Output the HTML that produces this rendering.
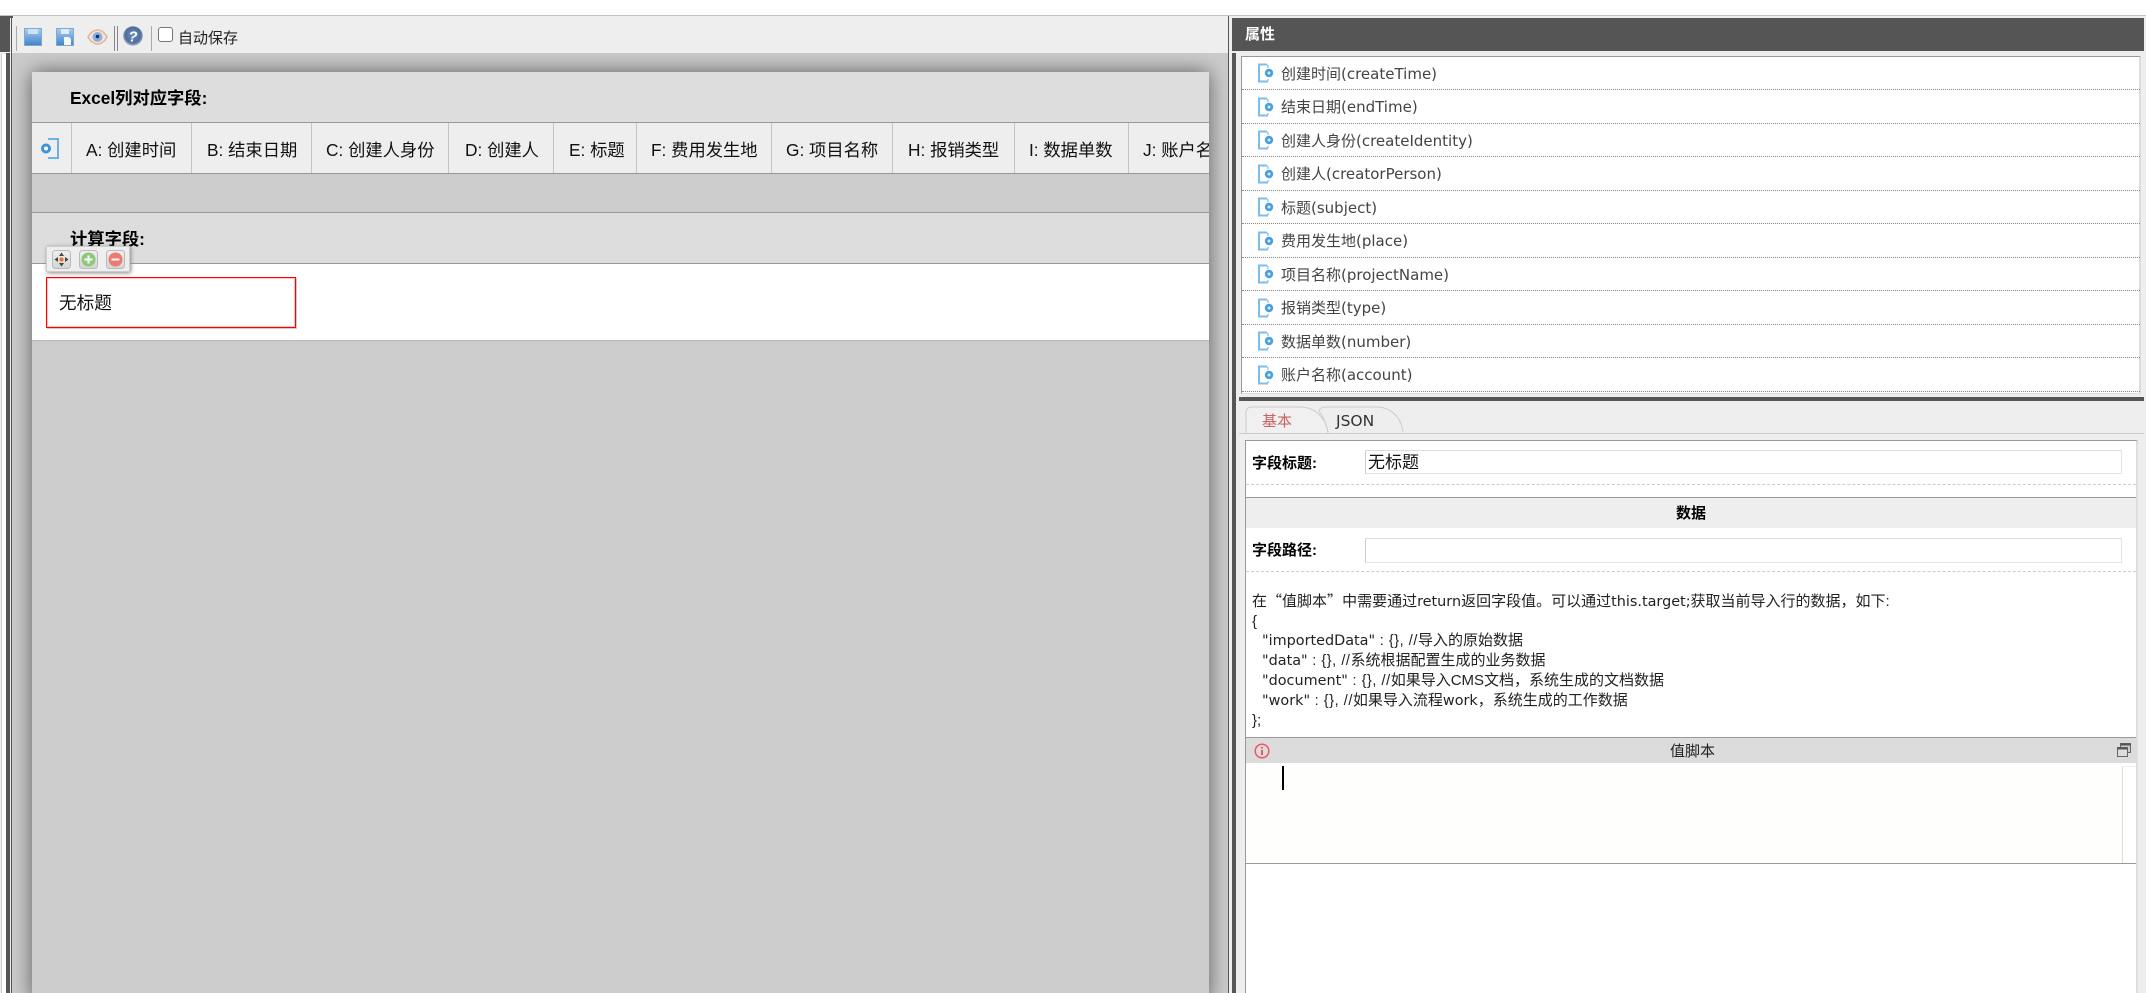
<!DOCTYPE html>
<html lang="zh"><head><meta charset="utf-8"><title>Excel</title>
<style>
html,body{margin:0;padding:0;width:2146px;height:993px;overflow:hidden;background:#fff}
body{position:relative;font-family:"Liberation Sans","Noto Sans CJK SC",sans-serif;color:#111}
.a{position:absolute;box-sizing:border-box}
.t{position:absolute;white-space:nowrap;line-height:20px;height:20px}
.d{font-family:"DejaVu Sans","Noto Sans CJK SC",sans-serif}
.b{font-weight:700}
.cell{position:absolute;top:140px;font-size:17.3px;line-height:20px;white-space:nowrap;color:#111}
.v{position:absolute;top:123px;width:1px;height:50px;background:#c4c4c4}
.li{position:absolute;left:1281px;font-size:15px;color:#444;font-family:"DejaVu Sans","Noto Sans CJK SC",sans-serif;line-height:20px;white-space:nowrap}
.ln{position:absolute;left:1242px;width:898px;height:0;border-top:1px dotted #888}
.ic{position:absolute;left:1257px;width:17px;height:20px}
.ds{position:absolute;font-size:14.4px;line-height:20px;white-space:nowrap;color:#222;font-family:"DejaVu Sans","Noto Sans CJK SC",sans-serif}
.c{font-size:15px;font-family:"Liberation Sans","Noto Sans CJK SC",sans-serif}
.q{font-size:15px;font-family:"Noto Sans CJK SC",sans-serif}
.p{font-size:14.5px;letter-spacing:.55px;font-family:"Liberation Sans","Noto Sans CJK SC",sans-serif}
</style></head><body>

<!-- top line and toolbar -->
<div class="a" style="left:0;top:15px;width:2146px;height:1px;background:#c4c4c4"></div>
<div class="a" style="left:0;top:16px;width:1229px;height:37px;background:#eee"></div>
<div class="a" style="left:0;top:16px;width:13px;height:2px;background:#555"></div>
<div class="a" style="left:0;top:18px;width:10px;height:34px;background:#555"></div>
<div class="a" style="left:0;top:53px;width:11px;height:940px;background:#eee"></div>
<div class="a" style="left:1px;top:54px;width:5px;height:939px;background:#fff;border-left:1px solid #ccc"></div>
<div class="a" style="left:6px;top:53px;width:4px;height:940px;background:#555"></div>
<div class="a" style="left:11px;top:16px;width:1px;height:977px;background:#555"></div>

<!-- toolbar items -->
<div class="a" style="left:16px;top:26px;width:1px;height:25px;background:#aaa"></div>
<svg class="a" style="left:24px;top:28px" width="18" height="18" viewBox="0 0 18 18"><defs><linearGradient id="g1" x1="0" y1="0" x2="0" y2="1"><stop offset="0" stop-color="#a9cdee"/><stop offset="1" stop-color="#3f84c9"/></linearGradient></defs><rect x=".5" y=".5" width="17" height="17" fill="url(#g1)" stroke="#7da8d0"/><rect x="4" y="1" width="10" height="5" fill="#cfe2f4"/></svg>
<svg class="a" style="left:56px;top:28px" width="18" height="18" viewBox="0 0 18 18"><rect x=".5" y=".5" width="17" height="17" fill="url(#g1)" stroke="#7da8d0"/><rect x="5" y="1" width="8" height="5" fill="#e0ecf7"/><path d="M8 9h5l2 2v6H8z" fill="#f4f7fa"/></svg>
<svg class="a" style="left:87px;top:29px" width="21" height="16" viewBox="0 0 21 16"><path d="M1 8C4 2.500 8 1 10.500 1S17 2.500 20 8c-3 5.500-7 7-9.500 7S4 13.500 1 8z" fill="#f2e6da" stroke="#e0b795" stroke-width="1.500"/><circle cx="10.500" cy="8" r="5" fill="#8aaee2"/><circle cx="10.500" cy="7.500" r="1.800" fill="#1d2b50"/></svg>
<div class="a" style="left:114px;top:26px;width:1px;height:25px;background:#888"></div>
<div class="a" style="left:117px;top:26px;width:1px;height:25px;background:#888"></div>
<svg class="a" style="left:123px;top:26px" width="20" height="20" viewBox="0 0 20 20"><defs><radialGradient id="g2" cx=".5" cy=".45" r=".55"><stop offset="0" stop-color="#6f8cbc"/><stop offset=".72" stop-color="#4f6c9e"/><stop offset="1" stop-color="#b4bcc8"/></radialGradient></defs><circle cx="10" cy="10" r="9.800" fill="url(#g2)"/><text x="10" y="15.500" font-family="Liberation Sans" font-weight="700" font-size="15" fill="#fff" text-anchor="middle" font-style="italic">?</text></svg>
<div class="a" style="left:151px;top:26px;width:1px;height:25px;background:#aaa"></div>
<div class="a" style="left:158px;top:27px;width:15px;height:15px;background:#fff;border:1px solid #767676;border-radius:3px"></div>
<div class="t" style="left:178px;top:29px;font-size:15px;color:#222">自动保存</div>

<!-- canvas -->
<div class="a" style="left:12px;top:53px;width:1216px;height:940px;background:#ccc;overflow:hidden">
  <div class="a" style="left:20px;top:19px;width:1177px;height:930px;background:#ccc;box-shadow:0 0 20px rgba(0,0,0,.55)"></div>
</div>
<div class="a" style="left:1228px;top:16px;width:1px;height:977px;background:#555"></div>
<div class="a" style="left:1229px;top:16px;width:917px;height:977px;background:#eee"></div>

<!-- panel contents -->
<div class="a" style="left:32px;top:72px;width:1177px;height:50px;background:#ddd"></div>
<div class="a" style="left:32px;top:122px;width:1177px;height:1px;background:#999"></div>
<div class="a" style="left:32px;top:123px;width:1177px;height:50px;background:#eee"></div>
<div class="a" style="left:32px;top:173px;width:1177px;height:1px;background:#999"></div>
<div class="a" style="left:32px;top:212px;width:1177px;height:1px;background:#999"></div>
<div class="a" style="left:32px;top:213px;width:1177px;height:50px;background:#ddd"></div>
<div class="a" style="left:32px;top:263px;width:1177px;height:1px;background:#999"></div>
<div class="a" style="left:32px;top:264px;width:1177px;height:76px;background:#fff"></div>
<div class="a" style="left:32px;top:340px;width:1177px;height:1px;background:#bbb"></div>

<div class="t b" style="left:70px;top:88px;font-size:17.3px;color:#000">Excel列对应字段:</div>
<div class="t b" style="left:70px;top:229px;font-size:17.3px;color:#000">计算字段:</div>

<svg class="a" style="left:40px;top:138px" width="19" height="21" viewBox="0 0 19 21" fill="none"><path d="M8 1h10v19H8" stroke="#6bb3e6" stroke-width="2"/><circle cx="6" cy="10.500" r="5" fill="#3d93d6"/><circle cx="6" cy="10.500" r="2" fill="#fff"/></svg>
<div class="v" style="left:71px"></div><div class="v" style="left:191px"></div><div class="v" style="left:311px"></div><div class="v" style="left:448px"></div><div class="v" style="left:553px"></div><div class="v" style="left:636px"></div><div class="v" style="left:771px"></div><div class="v" style="left:892px"></div><div class="v" style="left:1014px"></div><div class="v" style="left:1128px"></div>
<div class="cell" style="left:86px">A: 创建时间</div>
<div class="cell" style="left:207px">B: 结束日期</div>
<div class="cell" style="left:326px">C: 创建人身份</div>
<div class="cell" style="left:465px">D: 创建人</div>
<div class="cell" style="left:569px">E: 标题</div>
<div class="cell" style="left:651px">F: 费用发生地</div>
<div class="cell" style="left:786px">G: 项目名称</div>
<div class="cell" style="left:908px">H: 报销类型</div>
<div class="cell" style="left:1029px">I: 数据单数</div>
<div class="a" style="left:1143px;top:123px;width:66px;height:50px;overflow:hidden"><div class="cell" style="left:0;top:17px">J: 账户名称</div></div>

<!-- selected field -->
<div class="a" style="left:46px;top:277px;width:250px;height:51px;border:1px solid #f00;background:#fff;box-shadow:inset 0 0 0 1px rgba(255,0,0,.22),1px 1px 0 #ccc"></div>
<div class="t" style="left:59px;top:292px;font-size:17.6px;color:#111;margin-top:1px">无标题</div>
<div class="a" style="left:46px;top:246px;width:84px;height:26px;background:#eee;border:1px solid #ccc;box-shadow:1px 1px 4px #888"></div>
<svg class="a" style="left:52px;top:250px" width="74" height="19" viewBox="0 0 74 19">
<defs><linearGradient id="g3" x1="0" y1="0" x2="0" y2="1"><stop offset="0" stop-color="#f0f0f0"/><stop offset="1" stop-color="#d4d4d4"/></linearGradient></defs>
<rect x=".5" y=".5" width="18" height="18" rx="3" fill="url(#g3)" stroke="#bbb"/>
<path d="M9.500 2.500l2.500 3.500h-5zM9.500 16.500l2.500-3.500h-5zM2.500 9.500l3.500-2.500v5zM16.500 9.500l-3.500-2.500v5z" fill="#444"/><circle cx="9.500" cy="9.500" r="2" fill="#f07020"/>
<rect x="27.500" y=".5" width="18" height="18" rx="3" fill="url(#g3)" stroke="#bbb"/><circle cx="36.500" cy="9.500" r="7" fill="#8cc97a"/><path d="M36.500 5.500v8M32.500 9.500h8" stroke="#fff" stroke-width="2"/>
<rect x="54.500" y=".5" width="18" height="18" rx="3" fill="url(#g3)" stroke="#bbb"/><circle cx="63.500" cy="9.500" r="7" fill="#f0796f"/><path d="M59.500 9.500h8" stroke="#fff" stroke-width="2"/>
</svg>

<!-- right panel header -->
<div class="a" style="left:1232px;top:18px;width:912px;height:33px;background:#555"></div>
<div class="t b" style="left:1245px;top:25px;font-size:15px;color:#fff">属性</div>
<div class="a" style="left:1232px;top:53px;width:4px;height:940px;background:#555"></div>

<!-- list -->
<div class="a" style="left:1241px;top:56px;width:900px;height:338px;background:#fff;border:1px solid #ddd;border-top:1px solid #999;border-left:1px solid #999;border-right:2px solid #ddd"></div>
<div class="ln" style="top:89px"></div><div class="ln" style="top:123px"></div><div class="ln" style="top:156px"></div><div class="ln" style="top:190px"></div><div class="ln" style="top:223px"></div><div class="ln" style="top:257px"></div><div class="ln" style="top:290px"></div><div class="ln" style="top:324px"></div><div class="ln" style="top:357px"></div><div class="ln" style="top:391px"></div>
<svg width="0" height="0" style="position:absolute"><symbol id="fi" viewBox="0 0 17 20"><path d="M10 1.500H2v17h9" fill="none" stroke="#7cbdec" stroke-width="2"/><path d="M9 1l2 2v2M11 16v2" fill="none" stroke="#7cbdec" stroke-width="1.200"/><circle cx="12" cy="10" r="4.200" fill="#4a9fdf"/><circle cx="12" cy="10" r="1.500" fill="#d6eafa"/></symbol></svg>
<svg class="ic" style="top:63px"><use href="#fi"/></svg><div class="li" style="top:64px">创建时间(createTime)</div>
<svg class="ic" style="top:97px"><use href="#fi"/></svg><div class="li" style="top:97px">结束日期(endTime)</div>
<svg class="ic" style="top:130px"><use href="#fi"/></svg><div class="li" style="top:131px">创建人身份(createIdentity)</div>
<svg class="ic" style="top:164px"><use href="#fi"/></svg><div class="li" style="top:164px">创建人(creatorPerson)</div>
<svg class="ic" style="top:197px"><use href="#fi"/></svg><div class="li" style="top:198px">标题(subject)</div>
<svg class="ic" style="top:231px"><use href="#fi"/></svg><div class="li" style="top:231px">费用发生地(place)</div>
<svg class="ic" style="top:264px"><use href="#fi"/></svg><div class="li" style="top:265px">项目名称(projectName)</div>
<svg class="ic" style="top:298px"><use href="#fi"/></svg><div class="li" style="top:298px">报销类型(type)</div>
<svg class="ic" style="top:331px"><use href="#fi"/></svg><div class="li" style="top:332px">数据单数(number)</div>
<svg class="ic" style="top:365px"><use href="#fi"/></svg><div class="li" style="top:365px">账户名称(account)</div>

<!-- divider and tabs -->
<div class="a" style="left:1239px;top:397px;width:905px;height:4px;background:#555"></div>
<div class="a" style="left:1239px;top:433px;width:905px;height:1px;background:#ccc"></div>
<svg class="a" style="left:1244px;top:406px" width="162" height="28" viewBox="0 0 162 28" fill="none"><path d="M159 26C157 10 146 1 132 1H82C78 1 76 2 75 5C79 10 82 17 84 26" stroke="#ccc" fill="#eee"/><path d="M84 27C82 11 70 1 56 1H8C4 1 2 3 2 7v20" stroke="#ccc" fill="#f0f0f0"/></svg>
<div class="t d" style="left:1262px;top:411px;font-size:15px;color:#c86464">基本</div>
<div class="t d" style="left:1336px;top:411px;font-size:15.5px;color:#333">JSON</div>

<!-- form box -->
<div class="a" style="left:1245px;top:440px;width:893px;height:553px;background:#fff;border:1px solid #999;border-top:1px solid #999;border-bottom:0;border-right:2px solid #ddd"></div>
<div class="t b" style="left:1252px;top:454px;font-size:15px;color:#000">字段标题:</div>
<div class="a" style="left:1365px;top:450px;width:757px;height:24px;border:1px solid #e4e4e4;border-left-color:#ccc;border-top-color:#ddd"></div>
<div class="t" style="left:1368px;top:453px;font-size:17px;color:#111">无标题</div>
<div class="a" style="left:1246px;top:484px;width:890px;height:0;border-top:1px dashed #ccc"></div>
<div class="a" style="left:1246px;top:497px;width:890px;height:31px;background:#eee;border-top:1px solid #999"></div>
<div class="t b" style="left:1676px;top:504px;font-size:15px;color:#000">数据</div>
<div class="t b" style="left:1252px;top:541px;font-size:15px;color:#000">字段路径:</div>
<div class="a" style="left:1365px;top:538px;width:757px;height:25px;border:1px solid #e4e4e4;border-left-color:#ccc;border-top-color:#ddd"></div>
<div class="a" style="left:1246px;top:571px;width:890px;height:0;border-top:1px dashed #ccc"></div>

<!-- description -->
<div class="ds" style="left:1252px;top:591px"><span class="c">在</span><span class="q">“</span><span class="c">值脚本</span><span class="q">”</span><span class="c">中需要通过</span>return<span class="c">返回字段值。可以通过</span>this.target;<span class="c">获取当前导入行的数据，如下:</span></div>
<div class="ds c" style="left:1252px;top:612px">{</div>
<div class="ds" style="left:1262px;top:631px">"importedData"<span class="p"> : {}, //</span><span class="c">导入的原始数据</span></div>
<div class="ds" style="left:1262px;top:651px">"data"<span class="p"> : {}, //</span><span class="c">系统根据配置生成的业务数据</span></div>
<div class="ds" style="left:1262px;top:671px">"document"<span class="p"> : {}, //</span><span class="c">如果导入CMS文档，系统生成的文档数据</span></div>
<div class="ds" style="left:1262px;top:691px">"work"<span class="p"> : {}, //</span><span class="c">如果导入流程</span>work<span class="c">，系统生成的工作数据</span></div>
<div class="ds c" style="left:1252px;top:711px">};</div>

<!-- script -->
<div class="a" style="left:1246px;top:737px;width:890px;height:26px;background:#dcdcdc;border-top:1px solid #999"></div>
<svg class="a" style="left:1254px;top:743px" width="16" height="16" viewBox="0 0 16 16" fill="none"><circle cx="8" cy="8" r="6.800" stroke="#ee5a62" stroke-width="1.500"/><path d="M8 7v5" stroke="#e84c55" stroke-width="1.800"/><circle cx="8" cy="4.700" r="1" fill="#e84c55"/></svg>
<div class="t" style="left:1670px;top:742px;font-size:15px;color:#222">值脚本</div>
<svg class="a" style="left:2117px;top:743px" width="14" height="14" viewBox="0 0 14 14" fill="none"><rect x="3.500" y=".5" width="10" height="9" fill="#ccc" stroke="#666"/><path d="M3.500 1.500h10" stroke="#555" stroke-width="2"/><rect x=".5" y="4.500" width="10" height="9" fill="#ddd" stroke="#666"/><path d="M.5 5.500h10" stroke="#555" stroke-width="2"/></svg>
<div class="a" style="left:1246px;top:763px;width:890px;height:100px;background:#fefefd"></div>
<div class="a" style="left:2122px;top:766px;width:14px;height:97px;background:#fff;border-left:1px solid #ddd;border-top:1px solid #eee"></div>
<div class="a" style="left:1282px;top:766px;width:2px;height:24px;background:#000"></div>
<div class="a" style="left:1246px;top:863px;width:890px;height:1px;background:#999"></div>

</body></html>
